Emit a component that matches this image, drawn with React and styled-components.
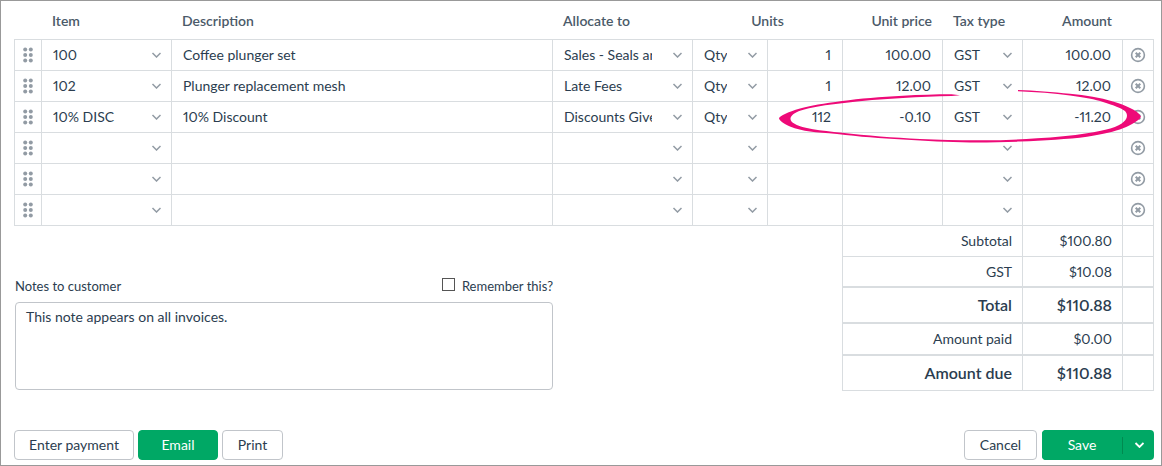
import React, { useState } from 'react';
import styled, { createGlobalStyle, css } from 'styled-components';

const GlobalStyle = createGlobalStyle`
  *, *::before, *::after {
    box-sizing: border-box;
  }

  body {
    margin: 0;
    background: #fff;
  }

  body, button, input, select, textarea {
    font-family: Lato, 'Liberation Sans', sans-serif;
    font-size: 14px;
    line-height: 20px;
    font-variant-numeric: proportional-nums;
    color: #2b3d4f;
  }
`;

const InvoiceFrame = styled.main`
  display: flex;
  flex-direction: column;
  min-height: 100vh;
  padding: 0 7px 5px 13px;
  border: 1px solid #999;
`;

const LinesWrapper = styled.div`
  position: relative;
`;

const LinesTable = styled.table`
  width: 100%;
  table-layout: fixed;
  border-collapse: separate;
  border-spacing: 0;
`;

const Col = styled.col`
  width: ${props => props.$width ? `${props.$width}px` : 'auto'};
`;

const HeaderCell = styled.th`
  height: 39px;
  padding: 2px 11px 0 10px;
  border-bottom: 1px solid #d9dde0;
  color: #4b5a69;
  font-weight: 600;
  text-align: ${props => props.$align || 'left'};
`;

const Cell = styled.td`
  height: 31px;
  padding: 0;
  border-right: 1px solid #d9dde0;
  border-bottom: 1px solid #d9dde0;

  &:first-child {
    border-left: 1px solid #d9dde0;
  }
`;

const field = css`
  display: block;
  width: 100%;
  height: 30px;
  margin: 0;
  border: 0;
  border-radius: 0;
  background: transparent;
`;

const TextField = styled.input`
  ${field}
  padding: 0 11px 2px;
  text-align: ${props => props.$align || 'left'};
`;

const SelectBox = styled.div`
  position: relative;

  svg {
    position: absolute;
    top: 12px;
    right: 10px;
    pointer-events: none;
  }
`;

const SelectField = styled.select`
  ${field}
  appearance: none;
  padding: 0 40px 0 11px;
`;

const IconButton = styled.button`
  display: flex;
  align-items: center;
  justify-content: center;
  width: 100%;
  height: 30px;
  padding: 0;
  border: 0;
  background: transparent;
  cursor: pointer;
`;

const Highlight = styled.svg`
  position: absolute;
  top: 87px;
  right: 12px;
  pointer-events: none;
`;

const Summary = styled.section`
  display: grid;
  grid-template-columns: 1fr 312px;
  column-gap: 289px;
`;

const Notes = styled.div`
  padding: 50px 0 0 1px;
`;

const NotesHeader = styled.div`
  display: flex;
  align-items: center;
  justify-content: space-between;
  margin-bottom: 6px;
`;

const NotesLabel = styled.label`
  font-size: 13px;
`;

const RememberLabel = styled.label`
  display: flex;
  align-items: center;
  gap: 7px;
  font-size: 13px;
`;

const Checkbox = styled.input`
  appearance: none;
  width: 13px;
  height: 13px;
  margin: 0 0 4px;
  border: 1px solid #555;
  background: #fff;

  &:checked {
    background: #00a865;
  }
`;

const NotesField = styled.textarea`
  display: block;
  width: 100%;
  height: 88px;
  padding: 4px 10px;
  border: 1px solid #c1c5ca;
  border-radius: 4px;
  resize: none;
`;

const TotalsTable = styled.table`
  width: 100%;
  table-layout: fixed;
  border-collapse: separate;
  border-spacing: 0;
`;

const TotalsRow = styled.tr`
  th, td {
    height: ${props => props.$height}px;
    padding: 0 10px;
    border-right: 1px solid #d9dde0;
    border-bottom: ${props => props.$line || 1}px solid #d9dde0;
    font-size: ${props => props.$strong ? '16px' : '14px'};
    font-weight: ${props => props.$strong ? 600 : 400};
    text-align: right;
  }

  th {
    border-left: 1px solid #d9dde0;
  }
`;

const Actions = styled.footer`
  display: flex;
  justify-content: space-between;
  margin-top: 39px;
`;

const ButtonGroup = styled.div`
  display: flex;
  gap: ${props => props.$gap}px;
`;

const Button = styled.button`
  min-width: ${props => props.$width}px;
  height: 30px;
  padding: 0 12px;
  border: 1px solid ${props => props.$primary ? '#00a865' : '#c1c5ca'};
  border-radius: 4px;
  background: ${props => props.$primary ? '#00a865' : '#fff'};
  color: ${props => props.$primary ? '#fff' : '#2b3d4f'};
  cursor: pointer;
`;

const SplitButton = styled.div`
  display: flex;
  align-items: center;
  height: 30px;
  border-radius: 4px;
  background: #00a865;
`;

const SaveMenuButton = styled.button`
  display: flex;
  align-items: center;
  justify-content: center;
  width: 32px;
  height: 17px;
  padding: 0;
  border: 0;
  border-left: 1px solid #008a50;
  background: transparent;
  cursor: pointer;
`;

const Chevron = ({ color = '#929ba4', weight = 1.5 }) => (
  <svg width="10" height="6" viewBox="0 0 10 6" fill="none" aria-hidden="true">
    <path d="M1.500 1l4 4 4-4" stroke={color} strokeWidth={weight} />
  </svg>
);

const DragIcon = () => (
  <svg width="10" height="16" viewBox="0 0 10 16" fill="#929ba4" aria-hidden="true">
    {[2.5, 8, 13.5].map(y => (
      <g key={y}>
        <circle cx="2.2" cy={y} r="2" />
        <circle cx="7.8" cy={y} r="2" />
      </g>
    ))}
  </svg>
);

const RemoveIcon = () => (
  <svg width="16" height="16" viewBox="0 0 16 16" fill="none" stroke="#929ba4" aria-hidden="true">
    <circle cx="8" cy="8" r="6.4" strokeWidth="1.6" />
    <path d="M5.700 5.700l4.600 4.600M10.300 5.700L5.700 10.300" strokeWidth="2" />
  </svg>
);

const Select = ({ label, value }) => (
  <SelectBox>
    <SelectField aria-label={label} defaultValue={value}>
      <option value={value}>{value}</option>
    </SelectField>
    <Chevron />
  </SelectBox>
);

const emptyLine = { item: '', description: '', account: '', unit: '', units: '', price: '', tax: '', amount: '' };

const lines = [
  { item: '100', description: 'Coffee plunger set', account: 'Sales - Seals and plungers', unit: 'Qty', units: '1', price: '100.00', tax: 'GST', amount: '100.00' },
  { item: '102', description: 'Plunger replacement mesh', account: 'Late Fees', unit: 'Qty', units: '1', price: '12.00', tax: 'GST', amount: '12.00' },
  { item: '10% DISC', description: '10% Discount', account: 'Discounts Given', unit: 'Qty', units: '112', price: '-0.10', tax: 'GST', amount: '-11.20' },
  emptyLine,
  emptyLine,
  emptyLine,
];

const totals = [
  { label: 'Subtotal', value: '$100.80', height: 31 },
  { label: 'GST', value: '$10.08', height: 31, line: 2 },
  { label: 'Total', value: '$110.88', height: 36, line: 2, strong: true },
  { label: 'Amount paid', value: '$0.00', height: 32, line: 2 },
  { label: 'Amount due', value: '$110.88', height: 35, strong: true },
];

const columnWidths = [28, 130, null, 140, 75, 75, 100, 80, 100, 31];

function App() {
  const [note, setNote] = useState('This note appears on all invoices.');
  const [remember, setRemember] = useState(false);

  return (
    <>
      <GlobalStyle />
      <InvoiceFrame>
        <LinesWrapper>
          <LinesTable>
            <colgroup>
              {columnWidths.map((width, i) => <Col key={i} $width={width} />)}
            </colgroup>
            <thead>
              <tr>
                <HeaderCell as="td" />
                <HeaderCell>Item</HeaderCell>
                <HeaderCell>Description</HeaderCell>
                <HeaderCell>Allocate to</HeaderCell>
                <HeaderCell colSpan={2} $align="center">Units</HeaderCell>
                <HeaderCell $align="right">Unit price</HeaderCell>
                <HeaderCell>Tax type</HeaderCell>
                <HeaderCell $align="right">Amount</HeaderCell>
                <HeaderCell as="td" />
              </tr>
            </thead>
            <tbody>
              {lines.map((line, i) => (
                <tr key={i}>
                  <Cell><IconButton aria-label={`Move line ${i + 1}`}><DragIcon /></IconButton></Cell>
                  <Cell><Select label="Item" value={line.item} /></Cell>
                  <Cell><TextField aria-label="Description" defaultValue={line.description} /></Cell>
                  <Cell><Select label="Allocate to" value={line.account} /></Cell>
                  <Cell><Select label="Unit of measure" value={line.unit} /></Cell>
                  <Cell><TextField aria-label="Units" $align="right" defaultValue={line.units} /></Cell>
                  <Cell><TextField aria-label="Unit price" $align="right" defaultValue={line.price} /></Cell>
                  <Cell><Select label="Tax type" value={line.tax} /></Cell>
                  <Cell><TextField aria-label="Amount" $align="right" defaultValue={line.amount} /></Cell>
                  <Cell><IconButton aria-label={`Remove line ${i + 1}`}><RemoveIcon /></IconButton></Cell>
                </tr>
              ))}
            </tbody>
          </LinesTable>
          {/* Hand-drawn ring round the discount line */}
          <Highlight width="364" height="56" viewBox="0 0 364 56" fill="#ee0a78" aria-hidden="true">
            <path d="M182 7.3L173.500 6.300C158 6.300 141 6.900 125 7.700C102 9 82 10.500 64 13C46 15.500 32 17.500 22 20.500C10 24 1 28 1 30.500C2 33 6 36 12 38.500C18 41 25 42.500 32 43.500C39 44.500 48 45 59 46C82 48.800 102 50.300 125 51.600C148 53 170 54.300 192 54.500C210 54.600 226 54.200 242 53.600C266 52.500 290 51.200 309 48.700C325 46.500 337 43.500 345 40.300C354 36.500 361 32.500 363 28.700C361 25 357 22 352 20C347 17.500 342 15.500 335 13.500C322 9.500 308 7.500 292 5.800C275 4 256 2.500 240 2L240 3.300C258 4 276 5.500 292 7.500C306 9.300 318 11.500 325 14C336 17.500 343 20 347 23C350 26.500 349.500 30 346 33.500C341 39 327 42.500 309 45.300C294 47.700 277 49.300 259 50.300C238 51.800 218 52.500 199 52.300C179 52.200 160 51.900 142 51C116 49.500 88 47.500 64 44.700C53 43.700 43 42.700 35 41.300C25 39.500 16 36.500 13.700 33.700C12 31.500 12 29.500 14 27.500C17 24 23 22 31 20.200C41 18 53 16.500 64 15.300C84 12.700 104 11 125 10C141 9 158 8.200 173.700 8Z" />
          </Highlight>
        </LinesWrapper>

        <Summary>
          <Notes>
            <NotesHeader>
              <NotesLabel htmlFor="notes">Notes to customer</NotesLabel>
              <RememberLabel>
                <Checkbox type="checkbox" checked={remember} onChange={e => setRemember(e.target.checked)} />
                Remember this?
              </RememberLabel>
            </NotesHeader>
            <NotesField id="notes" value={note} onChange={e => setNote(e.target.value)} />
          </Notes>
          <TotalsTable>
            <colgroup>
              <Col />
              <Col $width={100} />
              <Col $width={31} />
            </colgroup>
            <tbody>
              {totals.map(row => (
                <TotalsRow key={row.label} $height={row.height} $line={row.line} $strong={row.strong}>
                  <th scope="row">{row.label}</th>
                  <td>{row.value}</td>
                  <td />
                </TotalsRow>
              ))}
            </tbody>
          </TotalsTable>
        </Summary>

        <Actions>
          <ButtonGroup $gap={4}>
            <Button $width={120}>Enter payment</Button>
            <Button $width={80} $primary>Email</Button>
            <Button $width={61}>Print</Button>
          </ButtonGroup>
          <ButtonGroup $gap={5}>
            <Button $width={73}>Cancel</Button>
            <SplitButton>
              <Button $width={80} $primary>Save</Button>
              <SaveMenuButton aria-label="More save options"><Chevron color="#fff" weight={1.8} /></SaveMenuButton>
            </SplitButton>
          </ButtonGroup>
        </Actions>
      </InvoiceFrame>
    </>
  );
}

export default App;
